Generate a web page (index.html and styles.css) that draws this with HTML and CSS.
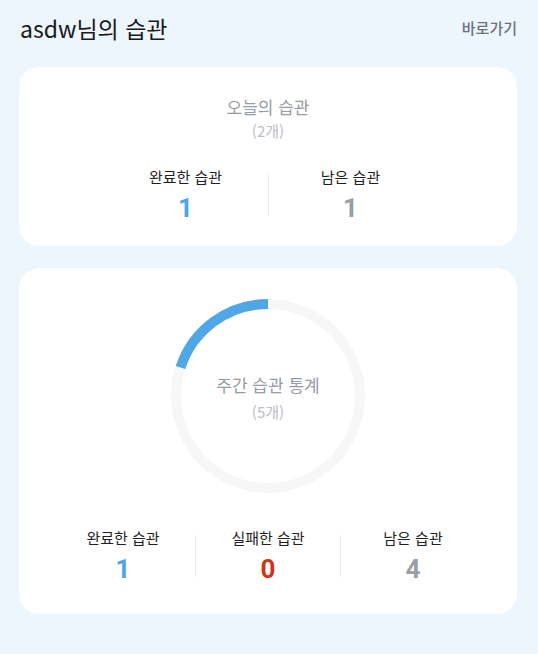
FILE: index.html
```html
<!DOCTYPE html>
<html lang="ko">
<head>
<meta charset="utf-8">
<link rel="stylesheet" href="styles.css">
</head>
<body>
<div class="page">
  <header class="header">
    <h1 class="title">asdw님의 습관</h1>
    <a class="shortcut">바로가기</a>
  </header>

  <section class="card today">
    <div class="card-title">오늘의 습관</div>
    <div class="card-sub">(2개)</div>
    <div class="stats two">
      <div class="stat">
        <div class="label">완료한 습관</div>
        <div class="num blue">1</div>
      </div>
      <div class="divider"></div>
      <div class="stat">
        <div class="label">남은 습관</div>
        <div class="num gray">1</div>
      </div>
    </div>
  </section>

  <section class="card weekly">
    <div class="ring">
      <svg class="ring-svg" width="194" height="194" viewBox="0 0 194 194">
        <circle cx="97" cy="97" r="92" fill="none" stroke="#f7f7f8" stroke-width="10"/>
        <path d="M97 5 A92 92 0 0 0 9.5 68.57" fill="none" stroke="#4fa7e6" stroke-width="10"/>
      </svg>
      <div class="ring-text">
        <div class="card-title">주간 습관 통계</div>
        <div class="card-sub ring-sub">(5개)</div>
      </div>
    </div>
    <div class="stats three">
      <div class="stat">
        <div class="label">완료한 습관</div>
        <div class="num blue">1</div>
      </div>
      <div class="divider"></div>
      <div class="stat">
        <div class="label">실패한 습관</div>
        <div class="num red">0</div>
      </div>
      <div class="divider"></div>
      <div class="stat">
        <div class="label">남은 습관</div>
        <div class="num gray">4</div>
      </div>
    </div>
  </section>
</div>
</body>
</html>
```

FILE: styles.css
```css
* { box-sizing: border-box; }
html, body {
  margin: 0;
  padding: 0;
  background: #edf5fd;
  font-family: "Noto Sans CJK KR", "Noto Sans", sans-serif;
  color: #1d1d1f;
}
.page {
  width: 538px;
  height: 654px;
  padding: 0 21px 0 19px;
}
.header {
  height: 56px;
  display: flex;
  align-items: center;
  justify-content: space-between;
  padding-left: 1px;
}
.title {
  margin: 0;
  font-size: 23px;
  font-weight: 400;
  line-height: 30px;
  color: #1a1a1a;
}
.shortcut {
  font-size: 15px;
  line-height: 20px;
  color: #6e7178;
  font-weight: 500;
}
.card {
  background: #ffffff;
  border-radius: 20px;
  display: flex;
  flex-direction: column;
  align-items: center;
}
.today {
  margin-top: 11px;
  height: 179px;
  padding-top: 28px;
}
.weekly {
  margin-top: 22px;
  height: 346px;
  padding-top: 31px;
}
.card-title {
  font-size: 17px;
  line-height: 24px;
  color: #979ba3;
  text-align: center;
}
.card-sub {
  font-size: 15px;
  line-height: 24px;
  color: #b9bdc5;
  text-align: center;
}
.stats {
  display: flex;
  align-items: center;
}
.today .stats { margin-top: 24px; }
.weekly .stats { margin-top: 35px; }
.stats.two .stat { width: 164px; }
.stats.three .stat { width: 144px; }
.stat {
  display: flex;
  flex-direction: column;
  align-items: center;
}
.label {
  font-size: 15px;
  line-height: 20px;
  color: #1f1f22;
}
.num {
  margin-top: 6px;
  font-size: 26px;
  line-height: 30px;
  font-weight: 700;
  font-family: "Roboto", "Noto Sans", sans-serif;
}
.blue { color: #4ea6e8; }
.gray { color: #9a9ea6; }
.red { color: #cc3515; }
.divider {
  width: 1px;
  height: 42px;
  background: #eceef1;
  align-self: center;
}
.ring {
  width: 194px;
  height: 194px;
  display: grid;
}
.ring-svg, .ring-text {
  grid-area: 1 / 1;
}
.ring-text {
  margin-top: 74px;
  display: flex;
  flex-direction: column;
  align-items: center;
}
.ring-sub { margin-top: 3px; }
```
